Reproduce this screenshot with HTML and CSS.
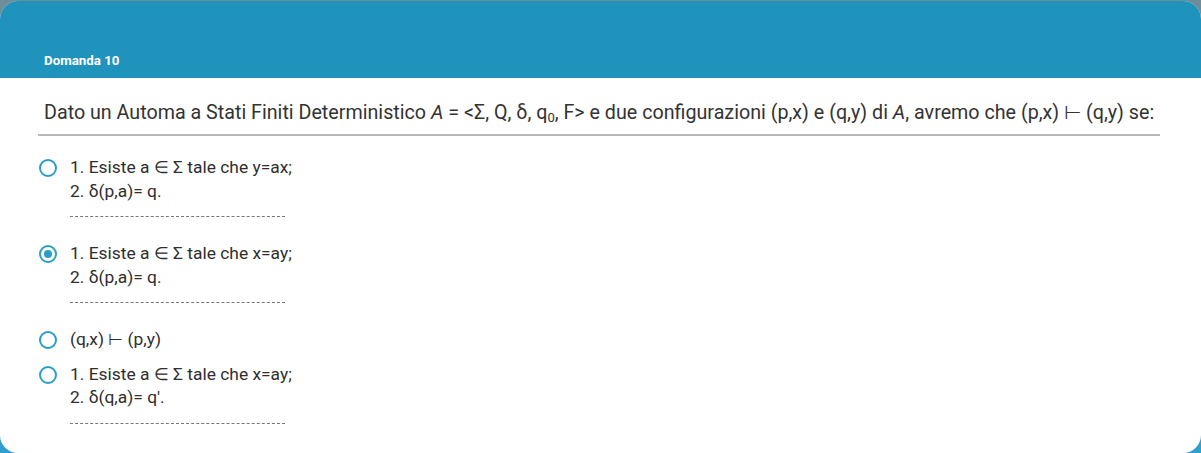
FILE: index.html
```html
<!DOCTYPE html>
<html lang="it">
<head>
<meta charset="utf-8">
<link rel="stylesheet" href="styles.css">
</head>
<body>
<div class="page">
  <div class="card">
    <div class="card-header"><span class="title">Domanda 10</span></div>
    <div class="card-body">
      <div class="question">Dato un Automa a Stati Finiti Deterministico <i>A</i> = &lt;&Sigma;, Q, &delta;, q<sub>0</sub>, F&gt; e due configurazioni (p,x) e (q,y) di <i>A</i>, avremo che (p,x) &#8866; (q,y) se:</div>
      <div class="options">
        <label class="option">
          <span class="radio"></span>
          <span class="text">1. Esiste a &isin; &Sigma; tale che y=ax;<br>2. &delta;(p,a)= q.<span class="rule"></span></span>
        </label>
        <label class="option">
          <span class="radio checked"></span>
          <span class="text">1. Esiste a &isin; &Sigma; tale che x=ay;<br>2. &delta;(p,a)= q.<span class="rule"></span></span>
        </label>
        <label class="option">
          <span class="radio"></span>
          <span class="text">(q,x) &#8866; (p,y)</span>
        </label>
        <label class="option">
          <span class="radio"></span>
          <span class="text">1. Esiste a &isin; &Sigma; tale che x=ay;<br>2. &delta;(q,a)= q'.<span class="rule"></span></span>
        </label>
      </div>
    </div>
  </div>
</div>
</body>
</html>
```
FILE: styles.css
```css
html, body {
  margin: 0;
  padding: 0;
}
body {
  background: linear-gradient(to bottom, #6f8d99 0px, #6f8d99 20px, #2f9fcb 420px);
  font-family: Roboto, "Noto Sans", sans-serif;
  color: #333;
  width: 1201px;
  height: 453px;
  overflow: hidden;
}
.page {
  padding-top: 1px;
}
.card {
  background: #fff;
  border-radius: 18px;
  overflow: hidden;
  height: 452px;
}
.card-header {
  background: #1f93bb;
  height: 77px;
  display: flex;
  align-items: flex-end;
  padding: 0 0 10px 44px;
  box-sizing: border-box;
}
.title {
  color: #fff;
  font-size: 13.3px;
  font-weight: 700;
}
.card-body {
  padding: 22px 41px 0 38px;
}
.question {
  font-size: 19.7px;
  line-height: 26px;
  padding: 0 0 8px 6px;
  border-bottom: 2px solid #b9b9b9;
  color: #333;
  white-space: nowrap;
}
.question sub {
  font-size: 13px;
  vertical-align: -3px;
  line-height: 0;
}
.options {
  display: flex;
  flex-direction: column;
  gap: 11px;
  padding-top: 20px;
}
.option {
  display: flex;
  align-items: flex-start;
  gap: 13px;
  font-size: 17.4px;
  line-height: 23.5px;
  color: #2e2e2e;
}
.text {
  display: block;
}
.radio {
  flex: none;
  width: 18px;
  height: 18px;
  box-sizing: border-box;
  border: 2px solid #2a9fc6;
  border-radius: 50%;
  margin: 3px 0 0 1px;
  display: flex;
  align-items: center;
  justify-content: center;
}
.radio.checked::after {
  content: "";
  width: 8px;
  height: 8px;
  border-radius: 50%;
  background: #2a9fc6;
}
.rule {
  display: block;
  width: 215px;
  height: 13px;
  border-bottom: 1px dashed #777;
  margin-bottom: 14px;
}
```
